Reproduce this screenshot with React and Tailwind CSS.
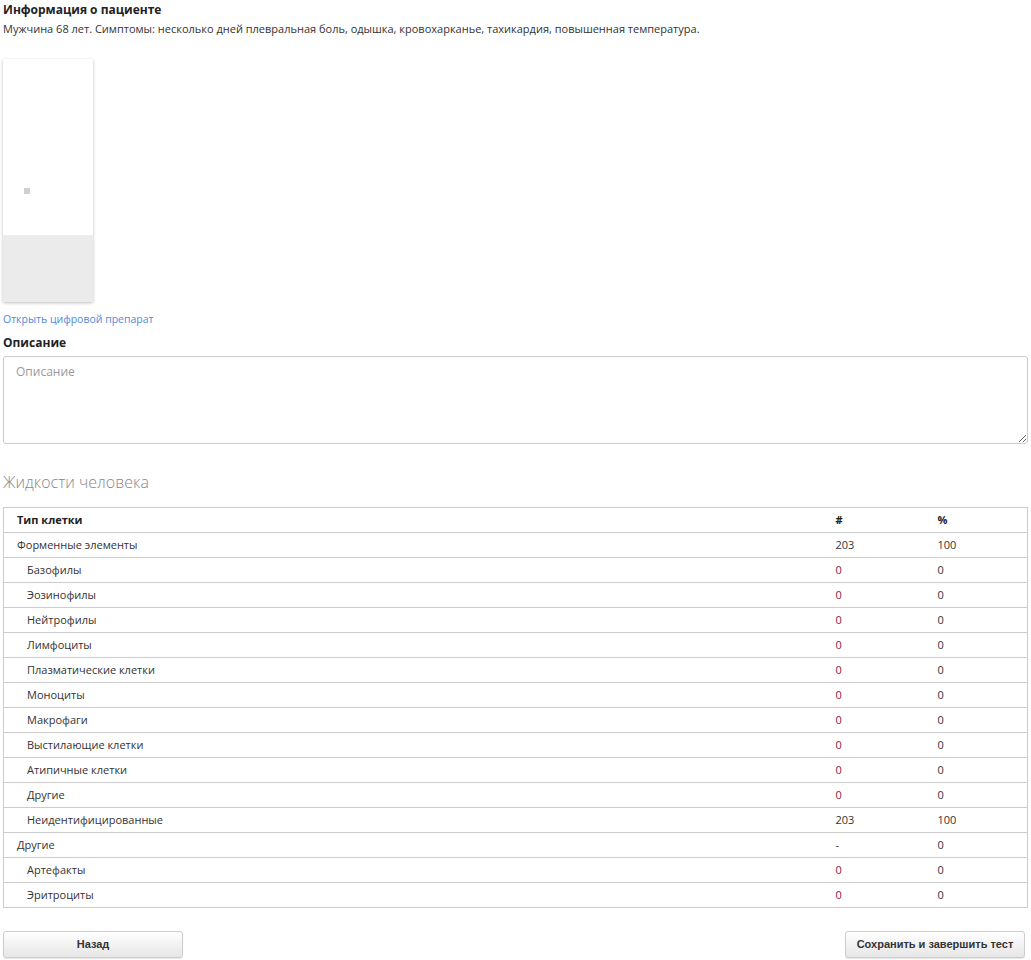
const rows = [
  { name: "Форменные элементы", n: "203", p: "100", sub: false, red: false },
  { name: "Базофилы", n: "0", p: "0", sub: true, red: true },
  { name: "Эозинофилы", n: "0", p: "0", sub: true, red: true },
  { name: "Нейтрофилы", n: "0", p: "0", sub: true, red: true },
  { name: "Лимфоциты", n: "0", p: "0", sub: true, red: true },
  { name: "Плазматические клетки", n: "0", p: "0", sub: true, red: true },
  { name: "Моноциты", n: "0", p: "0", sub: true, red: true },
  { name: "Макрофаги", n: "0", p: "0", sub: true, red: true },
  { name: "Выстилающие клетки", n: "0", p: "0", sub: true, red: true },
  { name: "Атипичные клетки", n: "0", p: "0", sub: true, red: true },
  { name: "Другие", n: "0", p: "0", sub: true, red: true },
  { name: "Неидентифицированные", n: "203", p: "100", sub: true, red: false },
  { name: "Другие", n: "-", p: "0", sub: false, red: false },
  { name: "Артефакты", n: "0", p: "0", sub: true, red: true },
  { name: "Эритроциты", n: "0", p: "0", sub: true, red: true },
];

const App = () => {
  return (
    <div className="px-[3px] pt-[2px] pb-[3px] text-[11px] text-[#333] font-['Open_Sans',sans-serif] bg-white">
      {/* patient info */}
      <h4 className="font-bold text-[12px] leading-[16px] text-[#222]">Информация о пациенте</h4>
      <p className="mt-[3px] leading-[16px]">
        Мужчина 68 лет. Симптомы: несколько дней плевральная боль, одышка, кровохарканье, тахикардия, повышенная температура.
      </p>

      {/* slide thumbnail */}
      <div className="mt-[22px] w-[90px] h-[243px] flex flex-col shadow-[0_1px_3px_rgba(0,0,0,0.25)] bg-white">
        <div className="h-[176px] pl-[21px] pt-[129px]">
          <div className="w-[6px] h-[6px] bg-[#cfcfd6]"></div>
        </div>
        <div className="flex-1 bg-[#ebebeb]"></div>
      </div>
      <a className="block mt-[9px] text-[10.5px] text-[#5089dc] leading-[16px]">Открыть цифровой препарат</a>

      {/* description */}
      <h4 className="mt-[7px] font-bold text-[12px] leading-[18px] text-[#222]">Описание</h4>
      <textarea
        placeholder="Описание"
        className="mt-[4px] block w-full h-[88px] border border-[#ccc] rounded-[3px] px-[12px] py-[6px] text-[12px] placeholder:text-[#999] font-['Open_Sans',sans-serif]"
      ></textarea>

      {/* fluids */}
      <h3 className="mt-[26px] text-[16px] font-light text-[#888] leading-[24px]">Жидкости человека</h3>
      <table className="mt-[13px] w-full border-collapse border border-[#ccc]">
        <thead>
          <tr className="border-b border-[#ccc] h-[25px]">
            <th className="text-left font-bold pl-[13px] text-[#222]">Тип клетки</th>
            <th className="text-left font-bold w-[102px] text-[#222]">#</th>
            <th className="text-left font-bold w-[90px] text-[#222]">%</th>
          </tr>
        </thead>
        <tbody>
          {rows.map((r, i) => (
            <tr key={i} className="border-b border-[#ccc] h-[25px]">
              <td className={r.sub ? "pl-[23px]" : "pl-[13px]"}>{r.name}</td>
              <td className={r.red ? "text-[#8b1a3a]" : ""}>{r.n}</td>
              <td>{r.p}</td>
            </tr>
          ))}
        </tbody>
      </table>

      {/* buttons */}
      <div className="mt-[23px] flex justify-between pr-[3px]">
        <button className="w-[180px] h-[27px] border border-[#ccc] rounded-[3px] bg-gradient-to-b from-white to-[#e6e6e6] font-['Liberation_Sans',sans-serif] font-bold text-[11px] text-[#333] shadow-[0_1px_1px_rgba(0,0,0,0.1)]">
          Назад
        </button>
        <button className="w-[180px] h-[27px] border border-[#ccc] rounded-[3px] bg-gradient-to-b from-white to-[#e6e6e6] font-['Liberation_Sans',sans-serif] font-bold text-[11px] text-[#333] shadow-[0_1px_1px_rgba(0,0,0,0.1)]">
          Сохранить и завершить тест
        </button>
      </div>
    </div>
  );
};

export default App;
